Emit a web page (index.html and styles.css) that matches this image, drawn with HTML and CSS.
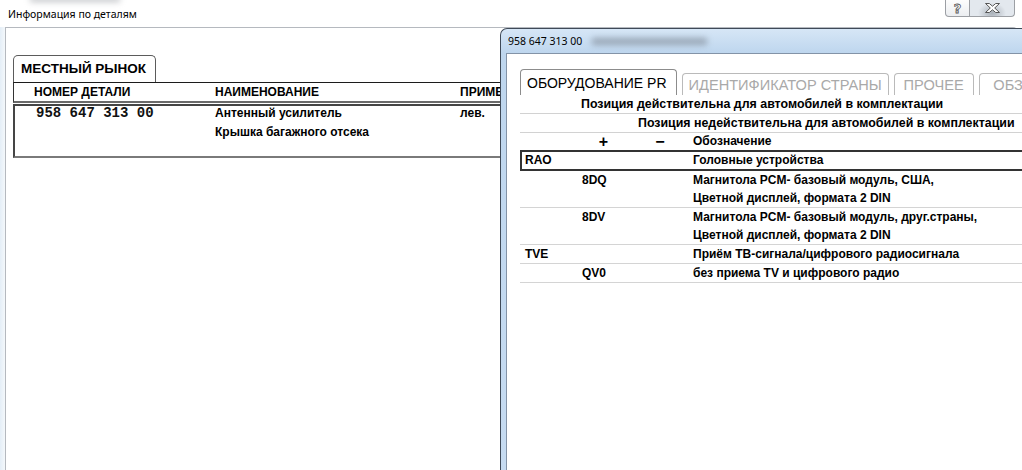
FILE: index.html
```html
<!DOCTYPE html>
<html lang="ru">
<head>
    <meta charset="UTF-8">
    <meta name="viewport" content="width=device-width, initial-scale=1.0">
    <title>Информация по деталям</title>
    <link rel="stylesheet" href="styles.css">
</head>
<body>
    <div class="main-window">
        <div class="titlebar">
            <span class="glass-blur"></span>
            <span class="title">Информация по деталям</span>
            <div class="caption-buttons">
                <button class="cap help">?</button>
                <button class="cap close">
                    <svg width="15" height="10" viewBox="0 0 15 10">
                        <path d="M0.5 0.5 H4.3 L7.5 3.2 L10.7 0.5 H14.5 L9.7 5 L14.5 9.5 H10.7 L7.5 6.8 L4.3 9.5 H0.5 L5.3 5 Z" fill="#fff" stroke="#555" stroke-width="1" stroke-linejoin="round"/>
                    </svg>
                </button>
            </div>
        </div>

        <div class="frame">
            <div class="local-tabs">
                <div class="local-tab">МЕСТНЫЙ РЫНОК</div>
            </div>
            <div class="parts-head">
                <div class="col-no">НОМЕР ДЕТАЛИ</div>
                <div>НАИМЕНОВАНИЕ</div>
                <div>ПРИМЕЧАНИЕ</div>
            </div>
            <div class="parts-body">
                <div class="parts-row">
                    <div class="col-no partno">958 647 313 00</div>
                    <div>Антенный усилитель</div>
                    <div>лев.</div>
                </div>
                <div class="parts-row">
                    <div class="col-no"></div>
                    <div>Крышка багажного отсека</div>
                    <div></div>
                </div>
            </div>
        </div>
    </div>

    <!-- второе окно поверх -->
    <div class="popup">
        <div class="popup-title">
            <span>958 647 313 00</span>
            <span class="title-blur"></span>
        </div>
        <div class="popup-body">
            <div class="pr-tabs">
                <div class="pr-tab active">ОБОРУДОВАНИЕ PR</div>
                <div class="pr-tab">ИДЕНТИФИКАТОР СТРАНЫ</div>
                <div class="pr-tab">ПРОЧЕЕ</div>
                <div class="pr-tab">ОБЗОР</div>
            </div>

            <div class="pr-caption">
                <div class="span-from-2">Позиция действительна для автомобилей в комплектации</div>
            </div>
            <div class="pr-caption">
                <div class="span-from-3">Позиция недействительна для автомобилей в комплектации</div>
            </div>
            <div class="pr-caption last">
                <div></div>
                <div class="sign">+</div>
                <div class="sign">−</div>
                <div class="desc">Обозначение</div>
            </div>

            <div class="pr-row group">
                <div class="code">RAO</div>
                <div></div>
                <div></div>
                <div class="desc">Головные устройства</div>
            </div>
            <div class="pr-row">
                <div class="code"></div>
                <div class="code">8DQ</div>
                <div></div>
                <div class="desc">Магнитола PCM- базовый модуль, США,<br>Цветной дисплей, формата 2 DIN</div>
            </div>
            <div class="pr-row">
                <div class="code"></div>
                <div class="code">8DV</div>
                <div></div>
                <div class="desc">Магнитола PCM- базовый модуль, друг.страны,<br>Цветной дисплей, формата 2 DIN</div>
            </div>
            <div class="pr-row">
                <div class="code">TVE</div>
                <div></div>
                <div></div>
                <div class="desc">Приём ТВ-сигнала/цифрового радиосигнала</div>
            </div>
            <div class="pr-row">
                <div class="code"></div>
                <div class="code">QV0</div>
                <div></div>
                <div class="desc">без приема TV и цифрового радио</div>
            </div>
        </div>
    </div>
</body>
</html>
```

FILE: styles.css
```css
* {
    box-sizing: border-box;
}
body {
    margin: 0;
    width: 1022px;
    height: 470px;
    overflow: hidden;
    position: relative;
    font-family: 'Liberation Sans', Arial, sans-serif;
    color: #000;
    background: #fff;
}

/* главное окно */
.main-window {
    height: 470px;
    display: flex;
    flex-direction: column;
    background: linear-gradient(to right, #e4eef7, #f4f8fb 5px, #fff 6px);
}
.titlebar {
    height: 27px;
    display: flex;
    justify-content: space-between;
    align-items: flex-start;
    background: #fff;
    position: relative;
}
.glass-blur {
    position: absolute;
    left: 30px;
    top: -4px;
    width: 90px;
    height: 6px;
    background: #8a8f96;
    filter: blur(3px);
    opacity: 0.5;
}
.title {
    font-family: 'Noto Sans', sans-serif;
    font-size: 10.5px;
    padding: 7px 0 0 8px;
}
.caption-buttons {
    display: flex;
    margin-right: 7px;
}
.cap {
    height: 17px;
    margin: 0;
    padding: 0;
    border: 1px solid #9c9fa4;
    border-top: none;
    display: flex;
    align-items: center;
    justify-content: center;
}
.help {
    width: 25px;
    border-radius: 0 0 0 4px;
    background: linear-gradient(#fdfdfd, #eceef1);
    font-family: 'DejaVu Sans', sans-serif;
    font-weight: bold;
    font-size: 13px;
    color: #fff;
    -webkit-text-stroke: 0.8px #555;
}
.close {
    width: 45px;
    border-left: none;
    border-radius: 0 0 4px 0;
    background: radial-gradient(ellipse 14px 10px at 50% 80%, #a9b0b8, #e3e8ee);
}

.frame {
    flex: 1;
    margin: 0 5px;
    border: 1px solid #b5b9bf;
    border-bottom: none;
    border-radius: 0 4px 0 0;
    background: #fff;
    padding: 27px 0 0 7px;
}
.local-tabs {
    display: flex;
}
.local-tab {
    height: 27px;
    border: 1px solid #5b5b5b;
    border-bottom: none;
    border-radius: 5px 5px 0 0;
    padding: 0 9px 0 7px;
    font-size: 13.5px;
    font-weight: bold;
    line-height: 26px;
}
.parts-head,
.parts-row {
    display: grid;
    grid-template-columns: 201px 245px 1fr;
    font-size: 12px;
    font-weight: bold;
}
.parts-head {
    height: 21px;
    line-height: 18px;
    border-top: 1px solid #1c1c1c;
    border-left: 1px solid #333;
    border-bottom: 2px solid #6a6a6a;
}
.parts-head .col-no {
    padding-left: 20px;
}
.parts-body {
    margin-top: 1px;
    height: 54px;
    border-top: 2px solid #454545;
    border-left: 2px solid #454545;
    border-bottom: 2px solid #7a7a7a;
}
.parts-row {
    grid-template-columns: 200px 245px 1fr;
    line-height: 19px;
}
.parts-row:first-child {
    margin-top: -2px;
}
.parts-row .col-no {
    padding-left: 21px;
}
.partno {
    font-family: 'Liberation Mono', 'Courier New', monospace;
    font-size: 14px;
    color: #111;
}

/* окно оборудования */
.popup {
    position: absolute;
    left: 500px;
    top: 28px;
    width: 522px;
    height: 442px;
    display: flex;
    flex-direction: column;
    border: 1px solid #3f4a58;
    border-right: none;
    border-bottom: none;
    border-radius: 7px 0 0 0;
    background: linear-gradient(#d6e6f6, #bed6ee 24px, #c6dbf1);
    padding-left: 5px;
}
.popup-title {
    height: 24px;
    display: flex;
    align-items: center;
    padding-left: 2px;
    font-family: 'Noto Sans', sans-serif;
    font-size: 10.5px;
}
.title-blur {
    width: 115px;
    height: 7px;
    margin-left: 10px;
    background: #6f7782;
    filter: blur(3px);
    opacity: 0.55;
}
.popup-body {
    flex: 1;
    overflow: hidden;
    background: #fff;
    border-top: 1px solid #8393a7;
    border-left: 1px solid #8393a7;
    padding: 15px 0 0 13px;
}
.pr-tabs {
    display: flex;
    align-items: flex-end;
    gap: 5px;
    height: 26px;
    white-space: nowrap;
    overflow: hidden;
}
.pr-tab {
    flex-shrink: 0;
    height: 22px;
    min-width: 80px;
    border: 1px solid #bababa;
    border-bottom: none;
    border-radius: 4px 4px 0 0;
    padding: 0 6px;
    text-align: center;
    font-size: 14.6px;
    line-height: 23px;
    color: #a9a9a9;
}
.pr-tab.active {
    height: 26px;
    border-color: #8c8c8c;
    padding: 0 9px 0 6px;
    font-size: 14px;
    line-height: 27px;
    color: #000;
}

.pr-caption,
.pr-row {
    display: grid;
    grid-template-columns: 57px 57px 56px 1fr;
    font-size: 12px;
    font-weight: bold;
    white-space: nowrap;
}
.pr-caption {
    font-size: 12.4px;
    line-height: 18px;
    border-bottom: 1px solid #d2d2d2;
}
.pr-caption.last {
    font-size: 12px;
    line-height: 17px;
    border-bottom: none;
}
.span-from-2 {
    grid-column: 2 / 5;
    padding-left: 4px;
}
.span-from-3 {
    grid-column: 3 / 5;
    padding-left: 4px;
}
.sign {
    text-align: center;
    font-size: 16px;
    padding-right: 4px;
}
.desc {
    padding-left: 3px;
}
.code {
    padding-left: 5px;
}
.pr-row {
    line-height: 18px;
    border-bottom: 1px solid #d4d4d4;
}
.pr-row.group {
    grid-template-columns: 55px 57px 56px 1fr;
    line-height: 17px;
    border: 2px solid #333;
    border-right: none;
}
.pr-row.group .code {
    padding-left: 3px;
}
```
